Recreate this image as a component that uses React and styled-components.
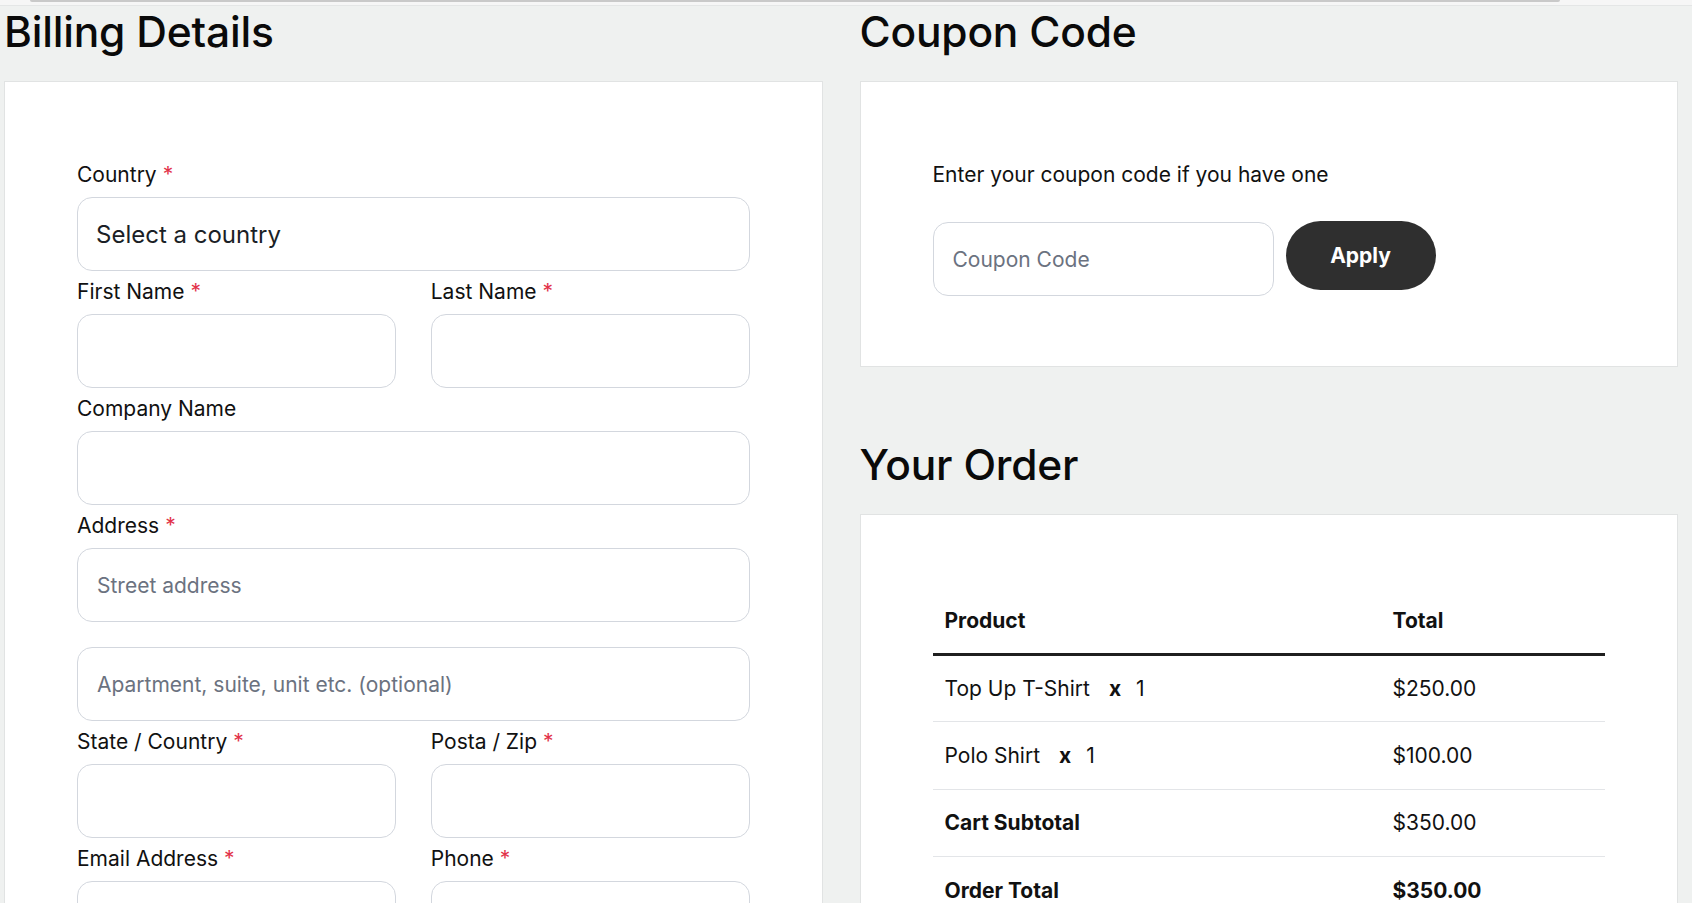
import React from 'react'
import styled, { createGlobalStyle } from 'styled-components'

const colors = {
  page: '#eff1f0',
  border: '#e1e3e3',
  field: '#d3d7de',
  text: '#111111',
  muted: '#6b7280',
  required: '#e2324a',
  dark: '#2f2f2f',
}

const GlobalStyle = createGlobalStyle`
  * { box-sizing: border-box; }
  body {
    margin: 0;
    background: ${colors.page};
    font-family: Inter, "Noto Sans", "Liberation Sans", sans-serif;
    color: ${colors.text};
  }
`

const TopStrip = styled.div`
  height: 6px;
  background: #f6f6f6;
  border-bottom: 1px solid #e4e6e6;
  position: relative;

  &:before {
    content: "";
    position: absolute;
    left: 30px;
    width: 1530px;
    top: 0;
    height: 2px;
    background: #c9c9c9;
    border-radius: 0 0 2px 2px;
  }
`

const Columns = styled.div`
  display: grid;
  grid-template-columns: 1fr 1fr;
  column-gap: 37px;
  padding: 0 14px 0 4px;
  align-items: start;
`

const Column = styled.section`
  display: flex;
  flex-direction: column;
`

const Heading = styled.h2`
  margin: ${p => (p.spaced ? '72px' : '0')} 0 24px;
  font-size: 42.5px;
  line-height: 1.2;
  font-weight: 500;
  letter-spacing: -0.2px;
  color: #0a0a0a;
`

const Card = styled.div`
  background: #fff;
  border: 1px solid ${colors.border};
  padding: ${p => p.pad || '79px 72px 72px'};
`

const Field = styled.div`
  display: flex;
  flex-direction: column;
  margin-bottom: 7px;
`

const Pair = styled.div`
  display: grid;
  grid-template-columns: 1fr 1fr;
  column-gap: 35px;
`

const Label = styled.label`
  font-size: 21px;
  line-height: 28px;
  margin-bottom: 8px;
  color: ${colors.text};
`

const Star = styled.span`
  color: ${colors.required};
  margin-left: 6px;
`

const Input = styled.input`
  height: 74px;
  width: 100%;
  border: 1px solid ${colors.field};
  border-radius: 15px;
  background: #fff;
  padding: 0 19px;
  font-family: inherit;
  font-size: 21px;
  color: ${colors.text};
  margin-bottom: ${p => (p.gap ? '25px' : '0')};

  &::placeholder {
    color: ${colors.muted};
  }
`

const Select = styled.select`
  appearance: none;
  height: 74px;
  width: 100%;
  border: 1px solid ${colors.field};
  border-radius: 15px;
  background: #fff;
  padding: 0 18px;
  font-family: inherit;
  font-size: 24px;
  color: #1b1f26;
`

const Note = styled.p`
  margin: 0 0 33px;
  font-size: 21px;
  line-height: 28px;
`

const CouponRow = styled.div`
  display: flex;
  align-items: flex-start;
  gap: 12px;

  ${Input} {
    width: 341px;
  }
`

const ApplyButton = styled.button`
  width: 150px;
  height: 69px;
  border: 0;
  border-radius: 999px;
  background: ${colors.dark};
  color: #fff;
  font-family: inherit;
  font-size: 21px;
  font-weight: 700;
  margin-top: -1px;
`

const Table = styled.table`
  width: 100%;
  border-collapse: collapse;
  table-layout: fixed;
  font-size: 21px;
`

const Th = styled.th`
  text-align: left;
  font-weight: 700;
  height: 66px;
  padding: 0 12px;
  border-bottom: 3px solid #1f1f1f;
  width: ${p => p.w || 'auto'};
`

const Td = styled.td`
  height: 67.5px;
  padding: 0 12px;
  font-weight: ${p => (p.bold ? 700 : 400)};
  border-top: 1px solid #e3e5e8;
`

const Qty = styled.strong`
  margin: 0 15px 0 19px;
`

const FormField = ({ label, required, children }) => (
  <Field>
    <Label>
      {label}
      {required && <Star>*</Star>}
    </Label>
    {children}
  </Field>
)

const orderItems = [
  { name: 'Top Up T-Shirt', qty: 1, total: '$250.00' },
  { name: 'Polo Shirt', qty: 1, total: '$100.00' },
]

export default function App() {
  return (
    <>
      <GlobalStyle />
      <TopStrip />
      <Columns>
        <Column>
          <Heading>Billing Details</Heading>
          <Card>
            <FormField label="Country" required>
              <Select defaultValue="">
                <option value="">Select a country</option>
              </Select>
            </FormField>
            <Pair>
              <FormField label="First Name" required>
                <Input />
              </FormField>
              <FormField label="Last Name" required>
                <Input />
              </FormField>
            </Pair>
            <FormField label="Company Name">
              <Input />
            </FormField>
            <FormField label="Address" required>
              <Input gap placeholder="Street address" />
              <Input placeholder="Apartment, suite, unit etc. (optional)" />
            </FormField>
            <Pair>
              <FormField label="State / Country" required>
                <Input />
              </FormField>
              <FormField label="Posta / Zip" required>
                <Input />
              </FormField>
            </Pair>
            <Pair>
              <FormField label="Email Address" required>
                <Input />
              </FormField>
              <FormField label="Phone" required>
                <Input />
              </FormField>
            </Pair>
          </Card>
        </Column>

        <Column>
          <Heading>Coupon Code</Heading>
          <Card pad="79px 72px 70px">
            <Note>Enter your coupon code if you have one</Note>
            <CouponRow>
              <Input placeholder="Coupon Code" />
              <ApplyButton>Apply</ApplyButton>
            </CouponRow>
          </Card>

          <Heading spaced>Your Order</Heading>
          <Card pad="73px 72px 72px">
            <Table>
              <thead>
                <tr>
                  <Th w="448px">Product</Th>
                  <Th>Total</Th>
                </tr>
              </thead>
              <tbody>
                {orderItems.map(item => (
                  <tr key={item.name}>
                    <Td>
                      {item.name}
                      <Qty>x</Qty>
                      {item.qty}
                    </Td>
                    <Td>{item.total}</Td>
                  </tr>
                ))}
                <tr>
                  <Td bold>Cart Subtotal</Td>
                  <Td>$350.00</Td>
                </tr>
                <tr>
                  <Td bold>Order Total</Td>
                  <Td bold>$350.00</Td>
                </tr>
              </tbody>
            </Table>
          </Card>
        </Column>
      </Columns>
    </>
  )
}
